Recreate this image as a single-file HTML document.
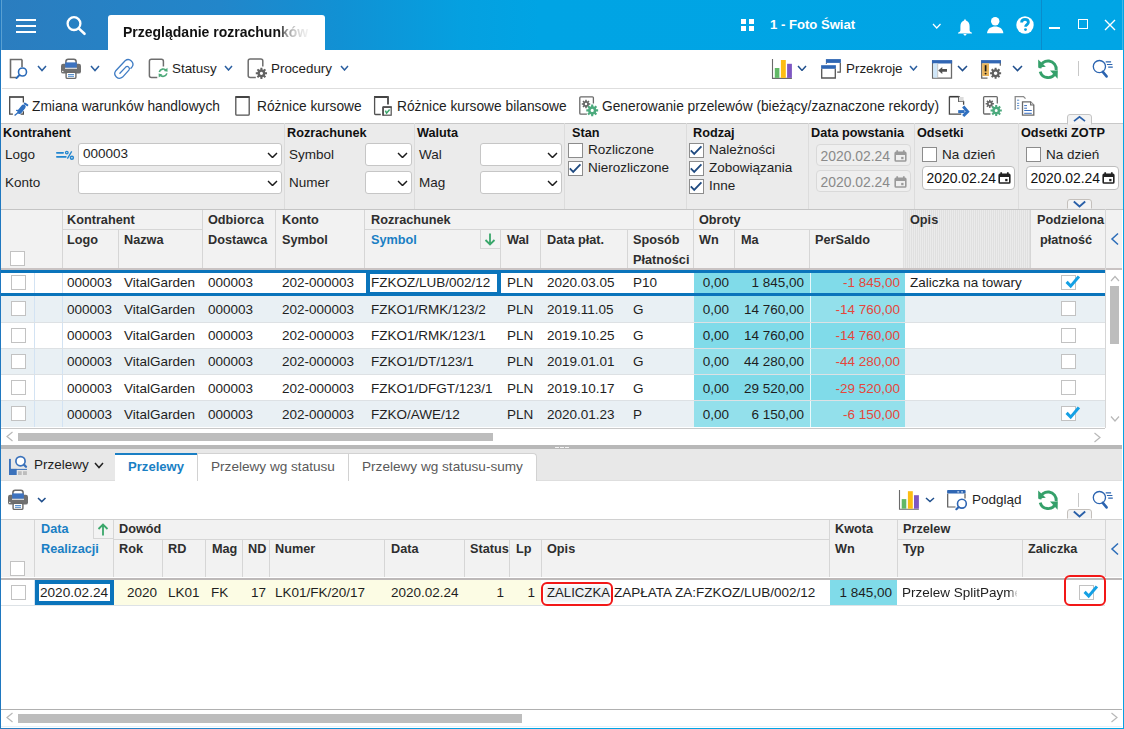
<!DOCTYPE html>
<html><head><meta charset="utf-8"><style>
html,body{margin:0;padding:0;width:1124px;height:729px;overflow:hidden;background:#fff;}
body{position:relative;font-family:"Liberation Sans",sans-serif;}
body>div,body>svg{position:absolute;}
.t{white-space:nowrap;line-height:20px;}
</style></head><body>
<div style="left:0px;top:0px;width:1124px;height:50px;background:linear-gradient(90deg,#2b7dbf 0px,#2286ca 220px,#1191d4 340px,#05a0e0 460px,#00a4e4 540px,#00a5e5 1124px);"></div>
<div style="left:1px;top:0px;width:1px;height:50px;background:#5aa0d2;"></div>
<div style="left:16px;top:19px;width:20px;height:2.2px;background:#fff;"></div>
<div style="left:16px;top:25px;width:20px;height:2.2px;background:#fff;"></div>
<div style="left:16px;top:31px;width:20px;height:2.2px;background:#fff;"></div>
<svg style="left:64px;top:13px;" width="26" height="26" viewBox="0 0 26 26"><circle cx="10" cy="10.6" r="6.4" fill="none" stroke="#fff" stroke-width="2.3"/><path d="M15 15.6 L20.5 20.8" stroke="#fff" stroke-width="2.6" stroke-linecap="round"/></svg>
<div style="left:108px;top:15px;width:217px;height:35px;background:#fff;border-radius:3px 3px 0 0;"></div>
<div class="t" style="left:123px;top:22px;font-size:14px;font-weight:bold;color:#111;line-height:20px;width:190px;overflow:hidden;-webkit-mask-image:linear-gradient(90deg,#000 156px,rgba(0,0,0,0.45) 163px,rgba(0,0,0,0.2) 173px,rgba(0,0,0,0.04) 186px);">Przeglądanie rozrachunków</div>
<div style="left:741px;top:19.3px;width:5.2px;height:4.8px;background:#fff;"></div>
<div style="left:748.7px;top:19.3px;width:5.2px;height:4.8px;background:#fff;"></div>
<div style="left:741px;top:26.2px;width:5.2px;height:4.8px;background:#fff;"></div>
<div style="left:748.7px;top:26.2px;width:5.2px;height:4.8px;background:#fff;"></div>
<div class="t" style="left:770px;top:15px;font-size:13.1px;font-weight:bold;color:#fff;line-height:20px;">1 - Foto Świat</div>
<svg style="left:932px;top:23px;" width="9.5" height="6" viewBox="0 0 9.5 6"><path d="M1 1 L4.75 5 L8.5 1" fill="none" stroke="#fff" stroke-width="1.2"/></svg>
<svg style="left:956px;top:17px;" width="18" height="20" viewBox="0 0 18 20"><path d="M9 1.8 L10 3.6 C12.6 4.4 13.6 6.8 13.6 9.6 L13.6 13.2 C13.6 14.4 14.6 15.2 16 15.8 L16 16.4 L2 16.4 L2 15.8 C3.4 15.2 4.4 14.4 4.4 13.2 L4.4 9.6 C4.4 6.8 5.4 4.4 8 3.6 Z" fill="#fff"/><path d="M7.2 17 L10.8 17 L9 19 Z" fill="#fff"/></svg>
<svg style="left:985px;top:14px;" width="22" height="20" viewBox="0 0 22 20"><circle cx="10.2" cy="7.2" r="4.2" fill="#fff"/><path d="M2 19.2 C2.6 14.6 6 12.6 10.2 12.6 C14.4 12.6 17.8 14.6 18.4 19.2 Z" fill="#fff"/></svg>
<svg style="left:1015px;top:15px;" width="20" height="20" viewBox="0 0 20 20"><circle cx="10" cy="10" r="8.7" fill="#fff"/><path d="M6.6 7.6 C6.6 5.4 8.2 4.4 10 4.4 C12 4.4 13.4 5.6 13.4 7.3 C13.4 9.6 10.6 9.6 10.6 11.8" fill="none" stroke="#05a0e0" stroke-width="2.8"/><circle cx="10.5" cy="14.6" r="1.4" fill="#05a0e0"/></svg>
<div style="left:1041px;top:0px;width:1px;height:50px;background:#0a8ccb;"></div>
<div style="left:1049px;top:27px;width:11px;height:1.6px;background:#fff;"></div>
<div style="left:1078px;top:19px;width:10px;height:10px;border:1.5px solid #fff;box-sizing:border-box;"></div>
<svg style="left:1104px;top:19px;" width="12" height="12" viewBox="0 0 12 12"><path d="M1 1 L11 11 M11 1 L1 11" stroke="#fff" stroke-width="1.4"/></svg>
<div style="left:1122px;top:0px;width:1px;height:50px;background:#40b8ea;"></div>
<!--borders-->
<div style="left:0px;top:50px;width:1124px;height:73px;background:#fff;"></div>
<div style="left:2px;top:88px;width:1120px;height:1px;background:#dedede;"></div>
<svg style="left:8px;top:58px;" width="24" height="22" viewBox="0 0 24 22"><path d="M14 1.5 L2.5 1.5 L2.5 19.5 L8 19.5 M14 1.5 L14 9" fill="none" stroke="#6b6b6b" stroke-width="1.6"/><circle cx="14.5" cy="14" r="4" fill="none" stroke="#2a6ab8" stroke-width="1.6"/><path d="M11.5 17 L8.5 20" stroke="#2a6ab8" stroke-width="2" stroke-linecap="round"/></svg>
<svg style="left:37px;top:65px;" width="10" height="6.5" viewBox="0 0 10 6.5"><path d="M1 1 L5.0 5.5 L9 1" fill="none" stroke="#2b5fa0" stroke-width="1.5"/></svg>
<svg style="left:60px;top:58px;" width="22" height="22" viewBox="0 0 22 22"><path d="M5.9 6 V3.6 Q5.9 1.3 8.2 1.3 H13.8 Q16.1 1.3 16.1 3.6 V6" fill="none" stroke="#6a6a6a" stroke-width="1.5"/><rect x="1" y="5.8" width="20" height="9.8" rx="2.2" fill="#707070"/><rect x="5.2" y="4.4" width="11.6" height="5.4" fill="#3d73c0"/><rect x="5" y="9.8" width="12" height="0.9" fill="#fff"/><circle cx="2.8" cy="13.4" r="0.7" fill="#fff"/><rect x="6.1" y="14.2" width="9.8" height="6.2" rx="1.2" fill="#fff" stroke="#6a6a6a" stroke-width="1.4"/><path d="M8 16.6 H14 M8 18.3 H14" stroke="#4a86c8" stroke-width="1"/></svg>
<svg style="left:90px;top:65px;" width="10" height="6.5" viewBox="0 0 10 6.5"><path d="M1 1 L5.0 5.5 L9 1" fill="none" stroke="#2b5fa0" stroke-width="1.5"/></svg>
<svg style="left:108px;top:54px;" width="30" height="30" viewBox="0 0 30 30"><path d="M22.9 14.3 L23.9 13.2 A4.7 4.7 0 0 0 17.1 6.8 L7.8 16.7 A4.7 4.7 0 0 0 14.6 23.1 L20.9 16.1 A2.2 2.2 0 0 0 17.7 13.1 L11.9 19.3" fill="none" stroke="#3f7cc4" stroke-width="1.3" stroke-linecap="round"/></svg>
<svg style="left:140px;top:54px;" width="30" height="30" viewBox="0 0 30 30"><path d="M17.6 23.4 H11.4 Q9.4 23.4 9.4 21.4 V7.3 Q9.4 5.3 11.4 5.3 H21.4 Q23.4 5.3 23.4 7.3 V12.5" fill="none" stroke="#6e6e6e" stroke-width="1.5"/><rect x="17.5" y="14" width="12" height="12" fill="#fff"/><path d="M19.3 18 A4 4 0 0 1 26.3 16.6 M26.9 19.4 A4 4 0 0 1 19.9 20.8" fill="none" stroke="#4aa877" stroke-width="1.6"/><path d="M27.4 13.8 L27.6 17.8 L23.8 17 Z M18.8 23.6 L18.6 19.6 L22.4 20.4 Z" fill="#4aa877"/></svg>
<div class="t" style="left:172px;top:59.36px;font-size:13.4px;color:#1e1e1e;">Statusy</div>
<svg style="left:224px;top:65px;" width="9" height="6" viewBox="0 0 9 6"><path d="M1 1 L4.5 5 L8 1" fill="none" stroke="#2b5fa0" stroke-width="1.5"/></svg>
<svg style="left:240px;top:54px;" width="30" height="30" viewBox="0 0 30 30"><path d="M15.8 23.4 H10.2 Q8.2 23.4 8.2 21.4 V7.1 Q8.2 5.1 10.2 5.1 H20.8 Q22.8 5.1 22.8 7.1 V12.6" fill="none" stroke="#6e6e6e" stroke-width="1.5"/><path d="M27.02 18.32 L27.02 20.28 L25.26 20.37 L24.88 21.27 L26.06 22.58 L24.68 23.96 L23.37 22.78 L22.47 23.16 L22.38 24.92 L20.42 24.92 L20.33 23.16 L19.43 22.78 L18.12 23.96 L16.74 22.58 L17.92 21.27 L17.54 20.37 L15.78 20.28 L15.78 18.32 L17.54 18.23 L17.92 17.33 L16.74 16.02 L18.12 14.64 L19.43 15.82 L20.33 15.44 L20.42 13.68 L22.38 13.68 L22.47 15.44 L23.37 15.82 L24.68 14.64 L26.06 16.02 L24.88 17.33 L25.26 18.23 Z M23.00 19.30 A1.6 1.6 0 1 0 19.80 19.30 A1.6 1.6 0 1 0 23.00 19.30 Z" fill="#626262" fill-rule="evenodd"/></svg>
<div class="t" style="left:271px;top:59.36px;font-size:13.4px;color:#1e1e1e;">Procedury</div>
<svg style="left:340px;top:65px;" width="9" height="6" viewBox="0 0 9 6"><path d="M1 1 L4.5 5 L8 1" fill="none" stroke="#2b5fa0" stroke-width="1.5"/></svg>
<svg style="left:765px;top:54px;" width="30" height="30" viewBox="0 0 30 30"><path d="M7.5 5.1 V24.4 H26.9" fill="none" stroke="#6a6a6a" stroke-width="1.1"/><rect x="9.8" y="14" width="4.6" height="9.9" fill="#62b866"/><rect x="15.9" y="6" width="4.9" height="17.9" fill="#fdbd12"/><rect x="22.1" y="9.8" width="4.8" height="14.1" fill="#7e57c2"/></svg>
<svg style="left:797px;top:65px;" width="10" height="6.4" viewBox="0 0 10 6.4"><path d="M1 1 L5.0 5.4 L9 1" fill="none" stroke="#1f4e8c" stroke-width="1.5"/></svg>
<svg style="left:765px;top:54px;" width="90" height="30" viewBox="0 0 90 30"><rect x="60.9" y="5.1" width="15" height="3.8" fill="#2f66b3"/><path d="M75.3 8.9 V18.2 H72.2 M61.4 8.9 V9.8" fill="none" stroke="#555" stroke-width="1.2"/><rect x="56.1" y="11.2" width="14.8" height="3.6" fill="#2f66b3"/><path d="M56.7 14.8 V24 H70.3 V14.8" fill="none" stroke="#555" stroke-width="1.3"/></svg>
<div class="t" style="left:846px;top:59.36px;font-size:13.4px;color:#1e1e1e;">Przekroje</div>
<svg style="left:909px;top:65px;" width="9" height="6" viewBox="0 0 9 6"><path d="M1 1 L4.5 5 L8 1" fill="none" stroke="#2b5fa0" stroke-width="1.5"/></svg>
<svg style="left:925px;top:54px;" width="30" height="30" viewBox="0 0 30 30"><path d="M7.6 6.4 V24.2 H26.5 V6.4" fill="none" stroke="#6a6a6a" stroke-width="1.3"/><rect x="7" y="6.1" width="20.1" height="3.4" fill="#3166b4"/><rect x="8.2" y="9.5" width="4.2" height="14.1" fill="#cfe6f8"/><path d="M12.7 9.5 V23.6" stroke="#b8b8b8" stroke-width="0.8"/><path d="M13.2 16.4 L17.3 12.9 V15.1 H22 V17.7 H17.3 V19.9 Z" fill="#505050"/></svg>
<svg style="left:957px;top:65px;" width="11" height="6.6" viewBox="0 0 11 6.6"><path d="M1 1 L5.5 5.6 L10 1" fill="none" stroke="#1f4e8c" stroke-width="1.5"/></svg>
<svg style="left:975px;top:54px;" width="30" height="30" viewBox="0 0 30 30"><path d="M6.7 6.4 V24.2 H12.5 M25.3 6.4 V11.8" fill="none" stroke="#6a6a6a" stroke-width="1.3"/><rect x="6.1" y="6.1" width="19.8" height="3.3" fill="#3166b4"/><rect x="7.2" y="9.3" width="6.8" height="12.7" fill="#e9b55b"/><path d="M10.6 11.2 V17.4" stroke="#1a1a1a" stroke-width="1.7"/><circle cx="10.6" cy="19.6" r="0.95" fill="#1a1a1a"/><path d="M26.12 18.24 L26.12 20.16 L24.46 20.27 L24.08 21.17 L25.18 22.42 L23.82 23.78 L22.57 22.68 L21.67 23.06 L21.56 24.72 L19.64 24.72 L19.53 23.06 L18.63 22.68 L17.38 23.78 L16.02 22.42 L17.12 21.17 L16.74 20.27 L15.08 20.16 L15.08 18.24 L16.74 18.13 L17.12 17.23 L16.02 15.98 L17.38 14.62 L18.63 15.72 L19.53 15.34 L19.64 13.68 L21.56 13.68 L21.67 15.34 L22.57 15.72 L23.82 14.62 L25.18 15.98 L24.08 17.23 L24.46 18.13 Z M22.40 19.20 A1.8 1.8 0 1 0 18.80 19.20 A1.8 1.8 0 1 0 22.40 19.20 Z" fill="#606060" fill-rule="evenodd"/></svg>
<svg style="left:1012px;top:65px;" width="11" height="6.6" viewBox="0 0 11 6.6"><path d="M1 1 L5.5 5.6 L10 1" fill="none" stroke="#1f4e8c" stroke-width="1.5"/></svg>
<svg style="left:1030px;top:52px;" width="30" height="30" viewBox="0 0 30 30"><path d="M9.9 16.2 A8.2 8.2 0 1 1 26.2 18.2" fill="none" stroke="#35a06a" stroke-width="2.9"/><path d="M10.2 19.6 A8.2 8.2 0 0 0 25.3 21.3" fill="none" stroke="#35a06a" stroke-width="2.9"/><path d="M8.2 7.4 L15.8 14.8 L8.2 15.4 Z" fill="#35a06a"/><path d="M20 18.6 L27.8 18.6 L27.6 26.8 Z" fill="#35a06a"/></svg>
<div style="left:1078px;top:61px;width:1px;height:15px;background:#c8c8c8;"></div>
<svg style="left:1090px;top:52px;" width="30" height="30" viewBox="0 0 30 30"><circle cx="9.4" cy="14.6" r="6.1" fill="none" stroke="#2b64b0" stroke-width="1.3"/><path d="M12.8 19.8 L16.6 24.4" stroke="#2b64b0" stroke-width="2.6" stroke-linecap="round"/><path d="M15.7 9.9 H21.1 M16.9 12.5 H22.4 M18.2 15.1 H22.8" stroke="#2b64b0" stroke-width="1.1"/></svg>
<svg style="left:4px;top:90px;" width="30" height="30" viewBox="0 0 30 30"><path d="M5.2 7 H19.8" stroke="#444" stroke-width="1.7"/><path d="M5.7 6.4 V24.1 H8.9 M16.6 24.1 H19.35 V21.3 M19.35 6.4 V12.4" fill="none" stroke="#4a4a4a" stroke-width="1.3"/><path d="M15.6 21.6 L19.4 16.9" stroke="#2f6fbf" stroke-width="4.6" stroke-linecap="round"/><path d="M20.8 13.6 L23.3 15.2" stroke="#2f6fbf" stroke-width="2" stroke-linecap="round"/><path d="M10.6 25.4 L14.8 22" stroke="#2f6fbf" stroke-width="1.3"/><path d="M12 20.4 H14.5" stroke="#2f6fbf" stroke-width="1.1"/></svg>
<div class="t" style="left:32px;top:97.24px;font-size:13.75px;color:#1e1e1e;">Zmiana warunków handlowych</div>
<svg style="left:228px;top:90px;" width="30" height="30" viewBox="0 0 30 30"><path d="M7.4 7 H21.6" stroke="#3a3a3a" stroke-width="1.9"/><path d="M7.8 6.6 V24.2 Q7.8 25.1 8.7 25.1 H20.3 Q21.2 25.1 21.2 24.2 V6.6" fill="none" stroke="#525252" stroke-width="1.3"/></svg>
<div class="t" style="left:257px;top:97.24px;font-size:13.75px;color:#1e1e1e;">Różnice kursowe</div>
<svg style="left:366px;top:90px;" width="30" height="30" viewBox="0 0 30 30"><path d="M8 7 H22.6" stroke="#3a3a3a" stroke-width="1.9"/><path d="M8.6 6.6 V23.6 Q8.6 24.5 9.5 24.5 H14.8" fill="none" stroke="#525252" stroke-width="1.3"/><path d="M22 6.6 V14.6" stroke="#525252" stroke-width="1.9"/><rect x="17" y="17" width="8.2" height="8.2" fill="#fff" stroke="#525252" stroke-width="1.2"/><path d="M16.9 17.1 H25.6 M17.1 17 V25.6" stroke="#525252" stroke-width="1.6"/><path d="M19.4 20.6 L20.6 23.2 L23.6 19.6" fill="none" stroke="#3aa76b" stroke-width="1.5"/></svg>
<div class="t" style="left:397px;top:97.24px;font-size:13.75px;color:#1e1e1e;">Różnice kursowe bilansowe</div>
<svg style="left:570px;top:90px;" width="30" height="30" viewBox="0 0 30 30"><path d="M16.9 24.2 H10.8 Q9.8 24.2 9.8 23.2 V7.8 Q9.8 6.8 10.8 6.8 H22.4 Q23.4 6.8 23.4 7.8 V13.6" fill="none" stroke="#6a6a6a" stroke-width="1.3"/><path d="M20.24 13.26 L20.24 14.74 L18.89 14.80 L18.61 15.48 L19.52 16.47 L18.47 17.52 L17.48 16.61 L16.80 16.89 L16.74 18.24 L15.26 18.24 L15.20 16.89 L14.52 16.61 L13.53 17.52 L12.48 16.47 L13.39 15.48 L13.11 14.80 L11.76 14.74 L11.76 13.26 L13.11 13.20 L13.39 12.52 L12.48 11.53 L13.53 10.48 L14.52 11.39 L15.20 11.11 L15.26 9.76 L16.74 9.76 L16.80 11.11 L17.48 11.39 L18.47 10.48 L19.52 11.53 L18.61 12.52 L18.89 13.20 Z M17.20 14.00 A1.2 1.2 0 1 0 14.80 14.00 A1.2 1.2 0 1 0 17.20 14.00 Z" fill="#666666" fill-rule="evenodd"/><path d="M28.11 19.37 L28.11 21.43 L26.25 21.52 L25.85 22.47 L27.11 23.85 L25.65 25.31 L24.27 24.05 L23.32 24.45 L23.23 26.31 L21.17 26.31 L21.08 24.45 L20.13 24.05 L18.75 25.31 L17.29 23.85 L18.55 22.47 L18.15 21.52 L16.29 21.43 L16.29 19.37 L18.15 19.28 L18.55 18.33 L17.29 16.95 L18.75 15.49 L20.13 16.75 L21.08 16.35 L21.17 14.49 L23.23 14.49 L23.32 16.35 L24.27 16.75 L25.65 15.49 L27.11 16.95 L25.85 18.33 L26.25 19.28 Z M23.80 20.40 A1.6 1.6 0 1 0 20.60 20.40 A1.6 1.6 0 1 0 23.80 20.40 Z" fill="#4caa7d" fill-rule="evenodd"/></svg>
<div class="t" style="left:602px;top:97.24px;font-size:13.75px;color:#1e1e1e;">Generowanie przelewów (bieżący/zaznaczone rekordy)</div>
<svg style="left:940px;top:90px;" width="30" height="30" viewBox="0 0 30 30"><path d="M9.3 6.7 H18.8" stroke="#3a3a3a" stroke-width="1.6"/><path d="M9.4 6.4 V24.1 H21.2 M18.8 6.4 L23.6 11.4 V14.8 M18.8 6.4 V11.4 H23.6" fill="none" stroke="#4a4a4a" stroke-width="1.3"/><rect x="19" y="7" width="4.6" height="4.4" fill="#dcdcdc"/><path d="M18.2 21.6 H24.6" stroke="#2f6fbf" stroke-width="3"/><path d="M23.2 16.6 L27.6 21.6 L23.2 26" fill="none" stroke="#2f6fbf" stroke-width="3"/></svg>
<svg style="left:980px;top:90px;" width="30" height="30" viewBox="0 0 30 30"><path d="M10.5 24.0 H4.6 Q3.6 24.0 3.6 23.0 V7.6 Q3.6 6.6 4.6 6.6 H16.3 Q17.3 6.6 17.3 7.6 V13.6" fill="none" stroke="#6a6a6a" stroke-width="1.3"/><path d="M13.94 13.08 L13.94 14.52 L12.59 14.57 L12.32 15.23 L13.24 16.22 L12.22 17.24 L11.23 16.32 L10.57 16.59 L10.52 17.94 L9.08 17.94 L9.03 16.59 L8.37 16.32 L7.38 17.24 L6.36 16.22 L7.28 15.23 L7.01 14.57 L5.66 14.52 L5.66 13.08 L7.01 13.03 L7.28 12.37 L6.36 11.38 L7.38 10.36 L8.37 11.28 L9.03 11.01 L9.08 9.66 L10.52 9.66 L10.57 11.01 L11.23 11.28 L12.22 10.36 L13.24 11.38 L12.32 12.37 L12.59 13.03 Z M10.90 13.80 A1.1 1.1 0 1 0 8.70 13.80 A1.1 1.1 0 1 0 10.90 13.80 Z" fill="#666666" fill-rule="evenodd"/><path d="M21.82 19.52 L21.82 21.48 L20.06 21.57 L19.68 22.47 L20.86 23.78 L19.48 25.16 L18.17 23.98 L17.27 24.36 L17.18 26.12 L15.22 26.12 L15.13 24.36 L14.23 23.98 L12.92 25.16 L11.54 23.78 L12.72 22.47 L12.34 21.57 L10.58 21.48 L10.58 19.52 L12.34 19.43 L12.72 18.53 L11.54 17.22 L12.92 15.84 L14.23 17.02 L15.13 16.64 L15.22 14.88 L17.18 14.88 L17.27 16.64 L18.17 17.02 L19.48 15.84 L20.86 17.22 L19.68 18.53 L20.06 19.43 Z M17.70 20.50 A1.5 1.5 0 1 0 14.70 20.50 A1.5 1.5 0 1 0 17.70 20.50 Z" fill="#4caa7d" fill-rule="evenodd"/></svg>
<svg style="left:1010px;top:90px;" width="30" height="30" viewBox="0 0 30 30"><path d="M5.2 20 V6.6 H13.5 L15.5 8.6" fill="none" stroke="#8a8a8a" stroke-width="1.3"/><path d="M7 10.2 H9.2 M7 13.3 H9.2 M7 15.6 H9.2 M7 18.2 H9.2" stroke="#4a82c8" stroke-width="0.9"/><path d="M12.5 25.2 V11.8 H20.6 L23.8 15 V25.2 Z" fill="#fff" stroke="#6a6a6a" stroke-width="1.3"/><path d="M20.6 11.8 V15 H23.8" fill="#ddd" stroke="#6a6a6a" stroke-width="1.1"/><path d="M14.2 15.6 H17 M14.2 18.2 H17 M14.2 20.5 H21.8 M14.2 23.3 H21.8" stroke="#3a6fbf" stroke-width="1"/></svg>
<div style="left:1px;top:123px;width:1122px;height:87px;background:#ebebeb;"></div>
<div style="left:1px;top:123px;width:1122px;height:1px;background:#c8c8c8;"></div>
<div style="left:1px;top:209px;width:1122px;height:1px;background:#c4c4c4;"></div>
<div style="left:284px;top:123px;width:1px;height:86px;background:#dcdcdc;"></div>
<div style="left:414px;top:123px;width:1px;height:86px;background:#dcdcdc;"></div>
<div style="left:564px;top:123px;width:1px;height:86px;background:#dcdcdc;"></div>
<div style="left:686px;top:123px;width:1px;height:86px;background:#dcdcdc;"></div>
<div style="left:808px;top:123px;width:1px;height:86px;background:#dcdcdc;"></div>
<div style="left:914px;top:123px;width:1px;height:86px;background:#dcdcdc;"></div>
<div style="left:1018px;top:123px;width:1px;height:86px;background:#dcdcdc;"></div>
<div class="t" style="left:3px;top:122.6px;font-size:12.7px;font-weight:bold;color:#111;">Kontrahent</div>
<div class="t" style="left:287px;top:122.6px;font-size:12.7px;font-weight:bold;color:#111;">Rozrachunek</div>
<div class="t" style="left:417px;top:122.6px;font-size:12.7px;font-weight:bold;color:#111;">Waluta</div>
<div class="t" style="left:572px;top:122.6px;font-size:12.7px;font-weight:bold;color:#111;">Stan</div>
<div class="t" style="left:693px;top:122.6px;font-size:12.7px;font-weight:bold;color:#111;">Rodzaj</div>
<div class="t" style="left:811px;top:122.6px;font-size:12.7px;font-weight:bold;color:#111;">Data powstania</div>
<div class="t" style="left:917px;top:122.6px;font-size:12.7px;font-weight:bold;color:#111;">Odsetki</div>
<div class="t" style="left:1021px;top:122.6px;font-size:12.7px;font-weight:bold;color:#111;">Odsetki ZOTP</div>
<div class="t" style="left:5px;top:145.32px;font-size:13.5px;color:#1e1e1e;">Logo</div>
<svg style="left:50px;top:145px;" width="28" height="20" viewBox="0 0 28 20"><path d="M6.9 7.8 H13.1 M6.9 11.8 H15.8" stroke="#2286cf" stroke-width="1.8" stroke-linecap="round"/><path d="M21.7 6.4 L17.4 13.7" stroke="#2286cf" stroke-width="1.3"/><circle cx="16.8" cy="7.6" r="1.3" fill="none" stroke="#2286cf" stroke-width="1.3"/><circle cx="21.9" cy="12.7" r="1.5" fill="none" stroke="#2286cf" stroke-width="1.4"/></svg>
<div style="left:78px;top:143px;width:204px;height:23px;background:#fff;border:1px solid #c6c6c6;border-radius:3px;box-sizing:border-box;"></div>
<div class="t" style="left:83px;top:144.32px;font-size:13.5px;color:#1e1e1e;">000003</div>
<svg style="left:267px;top:151.5px;" width="11" height="6.6" viewBox="0 0 11 6.6"><path d="M1 1 L5.5 5.6 L10 1" fill="none" stroke="#1a1a1a" stroke-width="1.4"/></svg>
<div class="t" style="left:5px;top:173.32px;font-size:13.5px;color:#1e1e1e;">Konto</div>
<div style="left:78px;top:171px;width:204px;height:23px;background:#fff;border:1px solid #c6c6c6;border-radius:3px;box-sizing:border-box;"></div>
<svg style="left:267px;top:179.5px;" width="11" height="6.6" viewBox="0 0 11 6.6"><path d="M1 1 L5.5 5.6 L10 1" fill="none" stroke="#1a1a1a" stroke-width="1.4"/></svg>
<div class="t" style="left:289px;top:145.32px;font-size:13.5px;color:#1e1e1e;">Symbol</div>
<div style="left:365px;top:143px;width:47px;height:23px;background:#fff;border:1px solid #c6c6c6;border-radius:3px;box-sizing:border-box;"></div>
<svg style="left:397px;top:151.5px;" width="11" height="6.6" viewBox="0 0 11 6.6"><path d="M1 1 L5.5 5.6 L10 1" fill="none" stroke="#1a1a1a" stroke-width="1.4"/></svg>
<div class="t" style="left:289px;top:173.32px;font-size:13.5px;color:#1e1e1e;">Numer</div>
<div style="left:365px;top:171px;width:47px;height:23px;background:#fff;border:1px solid #c6c6c6;border-radius:3px;box-sizing:border-box;"></div>
<svg style="left:397px;top:179.5px;" width="11" height="6.6" viewBox="0 0 11 6.6"><path d="M1 1 L5.5 5.6 L10 1" fill="none" stroke="#1a1a1a" stroke-width="1.4"/></svg>
<div class="t" style="left:419px;top:145.32px;font-size:13.5px;color:#1e1e1e;">Wal</div>
<div style="left:480px;top:143px;width:82px;height:23px;background:#fff;border:1px solid #c6c6c6;border-radius:3px;box-sizing:border-box;"></div>
<svg style="left:547px;top:151.5px;" width="11" height="6.6" viewBox="0 0 11 6.6"><path d="M1 1 L5.5 5.6 L10 1" fill="none" stroke="#1a1a1a" stroke-width="1.4"/></svg>
<div class="t" style="left:419px;top:173.32px;font-size:13.5px;color:#1e1e1e;">Mag</div>
<div style="left:480px;top:171px;width:82px;height:23px;background:#fff;border:1px solid #c6c6c6;border-radius:3px;box-sizing:border-box;"></div>
<svg style="left:547px;top:179.5px;" width="11" height="6.6" viewBox="0 0 11 6.6"><path d="M1 1 L5.5 5.6 L10 1" fill="none" stroke="#1a1a1a" stroke-width="1.4"/></svg>
<div style="left:568px;top:143px;width:15px;height:15px;background:#fff;border:1.3px solid #8c8c8c;box-sizing:border-box;"></div>
<div class="t" style="left:588px;top:140.32px;font-size:13.5px;color:#1e1e1e;">Rozliczone</div>
<div style="left:568px;top:161px;width:15px;height:15px;background:#fff;border:1.3px solid #8c8c8c;box-sizing:border-box;"></div>
<svg style="left:568px;top:161px;" width="15" height="15" viewBox="0 0 15 15"><path d="M1.8 7.4 L5.2 10.9 L12.4 3.4" fill="none" stroke="#1f4a80" stroke-width="1.8"/></svg>
<div class="t" style="left:588px;top:158.32px;font-size:13.5px;color:#1e1e1e;">Nierozliczone</div>
<div style="left:689px;top:143px;width:15px;height:15px;background:#fff;border:1.3px solid #8c8c8c;box-sizing:border-box;"></div>
<svg style="left:689px;top:143px;" width="15" height="15" viewBox="0 0 15 15"><path d="M1.8 7.4 L5.2 10.9 L12.4 3.4" fill="none" stroke="#1f4a80" stroke-width="1.8"/></svg>
<div class="t" style="left:709px;top:140.32px;font-size:13.5px;color:#1e1e1e;">Należności</div>
<div style="left:689px;top:161px;width:15px;height:15px;background:#fff;border:1.3px solid #8c8c8c;box-sizing:border-box;"></div>
<svg style="left:689px;top:161px;" width="15" height="15" viewBox="0 0 15 15"><path d="M1.8 7.4 L5.2 10.9 L12.4 3.4" fill="none" stroke="#1f4a80" stroke-width="1.8"/></svg>
<div class="t" style="left:709px;top:158.32px;font-size:13.5px;color:#1e1e1e;">Zobowiązania</div>
<div style="left:689px;top:179px;width:15px;height:15px;background:#fff;border:1.3px solid #8c8c8c;box-sizing:border-box;"></div>
<svg style="left:689px;top:179px;" width="15" height="15" viewBox="0 0 15 15"><path d="M1.8 7.4 L5.2 10.9 L12.4 3.4" fill="none" stroke="#1f4a80" stroke-width="1.8"/></svg>
<div class="t" style="left:709px;top:176.32px;font-size:13.5px;color:#1e1e1e;">Inne</div>
<div style="left:816px;top:144px;width:95px;height:22px;background:#efefef;border:1px solid #d9d9d9;border-radius:4px;box-sizing:border-box;"></div>
<div class="t" style="left:820.5px;top:145.68px;font-size:13.9px;color:#8a8a8a;">2020.02.24</div>
<svg style="left:894px;top:149.5px;" width="13" height="12" viewBox="0 0 13 12"><path d="M3.2 0.3 V2.8 M9.8 0.3 V2.8" stroke="#9a9a9a" stroke-width="1.7"/><rect x="1.2" y="2.4" width="10.6" height="8.6" rx="0.8" fill="none" stroke="#9a9a9a" stroke-width="1.6"/><rect x="1.2" y="2.4" width="10.6" height="2.6" fill="#9a9a9a"/><rect x="7.2" y="6.9" width="2.3" height="2.3" fill="#9a9a9a"/></svg>
<div style="left:816px;top:170px;width:95px;height:22px;background:#efefef;border:1px solid #d9d9d9;border-radius:4px;box-sizing:border-box;"></div>
<div class="t" style="left:820.5px;top:171.68px;font-size:13.9px;color:#8a8a8a;">2020.02.24</div>
<svg style="left:894px;top:175.5px;" width="13" height="12" viewBox="0 0 13 12"><path d="M3.2 0.3 V2.8 M9.8 0.3 V2.8" stroke="#9a9a9a" stroke-width="1.7"/><rect x="1.2" y="2.4" width="10.6" height="8.6" rx="0.8" fill="none" stroke="#9a9a9a" stroke-width="1.6"/><rect x="1.2" y="2.4" width="10.6" height="2.6" fill="#9a9a9a"/><rect x="7.2" y="6.9" width="2.3" height="2.3" fill="#9a9a9a"/></svg>
<div style="left:922px;top:147px;width:15px;height:15px;background:#fff;border:1.3px solid #8c8c8c;box-sizing:border-box;"></div>
<div class="t" style="left:942px;top:145.32px;font-size:13.5px;color:#1e1e1e;">Na dzień</div>
<div style="left:922px;top:166px;width:93px;height:24px;background:#fff;border:1px solid #bdbdbd;border-radius:4px;box-sizing:border-box;"></div>
<div class="t" style="left:926.5px;top:167.68px;font-size:13.9px;color:#111;">2020.02.24</div>
<svg style="left:998px;top:171.5px;" width="13" height="12" viewBox="0 0 13 12"><path d="M3.2 0.3 V2.8 M9.8 0.3 V2.8" stroke="#222" stroke-width="1.7"/><rect x="1.2" y="2.4" width="10.6" height="8.6" rx="0.8" fill="none" stroke="#222" stroke-width="1.6"/><rect x="1.2" y="2.4" width="10.6" height="2.6" fill="#222"/><rect x="7.2" y="6.9" width="2.3" height="2.3" fill="#222"/></svg>
<div style="left:1026px;top:147px;width:15px;height:15px;background:#fff;border:1.3px solid #8c8c8c;box-sizing:border-box;"></div>
<div class="t" style="left:1046px;top:145.32px;font-size:13.5px;color:#1e1e1e;">Na dzień</div>
<div style="left:1026px;top:166px;width:93px;height:24px;background:#fff;border:1px solid #bdbdbd;border-radius:4px;box-sizing:border-box;"></div>
<div class="t" style="left:1030.5px;top:167.68px;font-size:13.9px;color:#111;">2020.02.24</div>
<svg style="left:1102px;top:171.5px;" width="13" height="12" viewBox="0 0 13 12"><path d="M3.2 0.3 V2.8 M9.8 0.3 V2.8" stroke="#222" stroke-width="1.7"/><rect x="1.2" y="2.4" width="10.6" height="8.6" rx="0.8" fill="none" stroke="#222" stroke-width="1.6"/><rect x="1.2" y="2.4" width="10.6" height="2.6" fill="#222"/><rect x="7.2" y="6.9" width="2.3" height="2.3" fill="#222"/></svg>
<svg style="left:1067px;top:114px;" width="25" height="11" viewBox="0 0 25 11"><path d="M0.5 10.5 V3 Q0.5 0.5 3 0.5 H22 Q24.5 0.5 24.5 3 V10.5" fill="#f3f3f3" stroke="#c4c4c4"/><path d="M7 7.2 L12.5 2.8 L18 7.2" fill="none" stroke="#2a60a8" stroke-width="1.7"/></svg>
<svg style="left:1067px;top:199px;" width="25" height="10" viewBox="0 0 25 10"><path d="M0.5 9.5 V3 Q0.5 0.5 3 0.5 H22 Q24.5 0.5 24.5 3 V9.5" fill="#f3f3f3" stroke="#c4c0bc"/><path d="M6.8 2.6 L12.5 7.4 L18.2 2.6" fill="none" stroke="#2a60a8" stroke-width="1.9"/></svg>
<div style="left:1px;top:210px;width:1121px;height:58px;background:#f2f2f2;"></div>
<div style="left:903px;top:210px;width:127px;height:58px;background-color:#e6e6e6;background-image:repeating-linear-gradient(90deg,#e0e0e0 0 1px,#ebebeb 1px 2px);"></div>
<div style="left:62px;top:210px;width:1px;height:58px;background:#d6d6d6;"></div>
<div style="left:202px;top:210px;width:1px;height:58px;background:#d6d6d6;"></div>
<div style="left:275px;top:210px;width:1px;height:58px;background:#d6d6d6;"></div>
<div style="left:364px;top:210px;width:1px;height:58px;background:#d6d6d6;"></div>
<div style="left:693px;top:210px;width:1px;height:58px;background:#d6d6d6;"></div>
<div style="left:1030px;top:210px;width:1px;height:58px;background:#d6d6d6;"></div>
<div style="left:1105px;top:210px;width:1px;height:58px;background:#d6d6d6;"></div>
<div style="left:118px;top:229px;width:1px;height:39px;background:#d6d6d6;"></div>
<div style="left:500px;top:229px;width:1px;height:39px;background:#d6d6d6;"></div>
<div style="left:540px;top:229px;width:1px;height:39px;background:#d6d6d6;"></div>
<div style="left:627px;top:229px;width:1px;height:39px;background:#d6d6d6;"></div>
<div style="left:734px;top:229px;width:1px;height:39px;background:#d6d6d6;"></div>
<div style="left:809px;top:229px;width:1px;height:39px;background:#d6d6d6;"></div>
<div style="left:62px;top:229px;width:140px;height:1px;background:#d6d6d6;"></div>
<div style="left:364px;top:229px;width:329px;height:1px;background:#d6d6d6;"></div>
<div style="left:693px;top:229px;width:210px;height:1px;background:#d6d6d6;"></div>
<div style="left:480px;top:230px;width:20px;height:19px;border-left:1px solid #d6d6d6;border-bottom:1px solid #d6d6d6;box-sizing:border-box;background:#f3f3f3;"></div>
<svg style="left:483px;top:232px;" width="14" height="15" viewBox="0 0 14 15"><path d="M7 1.5 V12.5 M2.5 8 L7 12.5 L11.5 8" fill="none" stroke="#3aa76b" stroke-width="1.8"/></svg>
<div style="left:1px;top:268px;width:1121px;height:2px;background:#c9c3c3;"></div>
<div class="t" style="left:67px;top:209.6px;font-size:12.7px;font-weight:bold;color:#2e2e2e;">Kontrahent</div>
<div class="t" style="left:67px;top:229.6px;font-size:12.7px;font-weight:bold;color:#2e2e2e;">Logo</div>
<div class="t" style="left:124px;top:229.6px;font-size:12.7px;font-weight:bold;color:#2e2e2e;">Nazwa</div>
<div class="t" style="left:208px;top:209.6px;font-size:12.7px;font-weight:bold;color:#2e2e2e;">Odbiorca</div>
<div class="t" style="left:208px;top:229.6px;font-size:12.7px;font-weight:bold;color:#2e2e2e;">Dostawca</div>
<div class="t" style="left:282px;top:209.6px;font-size:12.7px;font-weight:bold;color:#2e2e2e;">Konto</div>
<div class="t" style="left:282px;top:229.6px;font-size:12.7px;font-weight:bold;color:#2e2e2e;">Symbol</div>
<div class="t" style="left:371px;top:209.6px;font-size:12.7px;font-weight:bold;color:#2e2e2e;">Rozrachunek</div>
<div class="t" style="left:371px;top:229.6px;font-size:12.7px;font-weight:bold;color:#1a7fc4;">Symbol</div>
<div class="t" style="left:507px;top:229.6px;font-size:12.7px;font-weight:bold;color:#2e2e2e;">Wal</div>
<div class="t" style="left:547px;top:229.6px;font-size:12.7px;font-weight:bold;color:#2e2e2e;">Data płat.</div>
<div class="t" style="left:633px;top:229.6px;font-size:12.7px;font-weight:bold;color:#2e2e2e;">Sposób</div>
<div class="t" style="left:633px;top:249.6px;font-size:12.7px;font-weight:bold;color:#2e2e2e;">Płatności</div>
<div class="t" style="left:699px;top:209.6px;font-size:12.7px;font-weight:bold;color:#2e2e2e;">Obroty</div>
<div class="t" style="left:699px;top:229.6px;font-size:12.7px;font-weight:bold;color:#2e2e2e;">Wn</div>
<div class="t" style="left:741px;top:229.6px;font-size:12.7px;font-weight:bold;color:#2e2e2e;">Ma</div>
<div class="t" style="left:815px;top:229.6px;font-size:12.7px;font-weight:bold;color:#2e2e2e;">PerSaldo</div>
<div class="t" style="left:910px;top:209.6px;font-size:12.7px;font-weight:bold;color:#2e2e2e;">Opis</div>
<div class="t" style="left:1037px;top:209.5px;width:68px;overflow:hidden;font-size:12.7px;font-weight:bold;color:#2e2e2e;">Podzielona</div>
<div class="t" style="left:1040px;top:229.6px;font-size:12.7px;font-weight:bold;color:#2e2e2e;">płatność</div>
<svg style="left:1109px;top:232px;" width="12" height="14" viewBox="0 0 12 14"><path d="M9 1.5 L3 7 L9 12.5" fill="none" stroke="#2b6cb8" stroke-width="1.5"/></svg>
<div style="left:10px;top:251px;width:15px;height:15px;background:#fff;border:1.6px solid #c2c2c2;box-sizing:border-box;"></div>
<div style="left:1px;top:270px;width:1104px;height:26px;background:#fff;"></div>
<div style="left:694px;top:270px;width:211px;height:26px;background:#80dbe9;"></div>
<div style="left:810px;top:270px;width:1px;height:26px;background:#ffffff;opacity:0.8;"></div>
<div style="left:34px;top:270px;width:1px;height:26px;background:#d3e3f3;"></div>
<div style="left:62px;top:270px;width:1px;height:26px;background:#d3e3f3;"></div>
<div style="left:1px;top:296px;width:1104px;height:27px;background:#e9f0f4;"></div>
<div style="left:694px;top:296px;width:211px;height:27px;background:#93e0eb;"></div>
<div style="left:810px;top:296px;width:1px;height:27px;background:#ffffff;opacity:0.8;"></div>
<div style="left:34px;top:296px;width:1px;height:27px;background:#d3e3f3;"></div>
<div style="left:62px;top:296px;width:1px;height:27px;background:#d3e3f3;"></div>
<div style="left:1px;top:323px;width:1104px;height:26px;background:#fff;"></div>
<div style="left:694px;top:323px;width:211px;height:26px;background:#80dbe9;"></div>
<div style="left:810px;top:323px;width:1px;height:26px;background:#ffffff;opacity:0.8;"></div>
<div style="left:34px;top:323px;width:1px;height:26px;background:#d3e3f3;"></div>
<div style="left:62px;top:323px;width:1px;height:26px;background:#d3e3f3;"></div>
<div style="left:1px;top:349px;width:1104px;height:26px;background:#e9f0f4;"></div>
<div style="left:694px;top:349px;width:211px;height:26px;background:#93e0eb;"></div>
<div style="left:810px;top:349px;width:1px;height:26px;background:#ffffff;opacity:0.8;"></div>
<div style="left:34px;top:349px;width:1px;height:26px;background:#d3e3f3;"></div>
<div style="left:62px;top:349px;width:1px;height:26px;background:#d3e3f3;"></div>
<div style="left:1px;top:375px;width:1104px;height:26px;background:#fff;"></div>
<div style="left:694px;top:375px;width:211px;height:26px;background:#80dbe9;"></div>
<div style="left:810px;top:375px;width:1px;height:26px;background:#ffffff;opacity:0.8;"></div>
<div style="left:34px;top:375px;width:1px;height:26px;background:#d3e3f3;"></div>
<div style="left:62px;top:375px;width:1px;height:26px;background:#d3e3f3;"></div>
<div style="left:1px;top:401px;width:1104px;height:26px;background:#e9f0f4;"></div>
<div style="left:694px;top:401px;width:211px;height:26px;background:#93e0eb;"></div>
<div style="left:810px;top:401px;width:1px;height:26px;background:#ffffff;opacity:0.8;"></div>
<div style="left:34px;top:401px;width:1px;height:26px;background:#d3e3f3;"></div>
<div style="left:62px;top:401px;width:1px;height:26px;background:#d3e3f3;"></div>
<div style="left:11px;top:275px;width:15px;height:15px;background:#fff;border:1.6px solid #c2c2c2;box-sizing:border-box;"></div>
<div class="t" style="left:67px;top:273.32px;font-size:13.5px;color:#1e1e1e;">000003</div>
<div class="t" style="left:124px;top:273.32px;font-size:13.5px;color:#1e1e1e;">VitalGarden</div>
<div class="t" style="left:208px;top:273.32px;font-size:13.5px;color:#1e1e1e;">000003</div>
<div class="t" style="left:282px;top:273.32px;font-size:13.5px;color:#1e1e1e;">202-000003</div>
<div class="t" style="left:371px;top:273.32px;font-size:13.5px;color:#1e1e1e;">FZKOZ/LUB/002/12</div>
<div class="t" style="left:507px;top:273.32px;font-size:13.5px;color:#1e1e1e;">PLN</div>
<div class="t" style="left:547px;top:273.32px;font-size:13.5px;color:#1e1e1e;">2020.03.05</div>
<div class="t" style="left:633px;top:273.32px;font-size:13.5px;color:#1e1e1e;">P10</div>
<div class="t" style="right:395px;top:273.32px;font-size:13.5px;color:#1e1e1e;">0,00</div>
<div class="t" style="right:320px;top:273.32px;font-size:13.5px;color:#1e1e1e;">1 845,00</div>
<div class="t" style="right:224px;top:273.32px;font-size:13.5px;color:#e5473b;">-1 845,00</div>
<div class="t" style="left:910px;top:273.32px;font-size:13.5px;color:#1e1e1e;">Zaliczka na towary</div>
<div style="left:1061px;top:275px;width:15px;height:15px;background:#fff;border:1.6px solid #c2c2c2;box-sizing:border-box;"></div>
<svg style="left:1062px;top:272px;" width="18" height="18" viewBox="0 0 18 18"><path d="M4.6 9.9 L8.7 14.1 L16.9 4.4" fill="none" stroke="#14a0e4" stroke-width="3"/></svg>
<div style="left:11px;top:301px;width:15px;height:15px;background:#fff;border:1.6px solid #c2c2c2;box-sizing:border-box;"></div>
<div class="t" style="left:67px;top:300.32px;font-size:13.5px;color:#1e1e1e;">000003</div>
<div class="t" style="left:124px;top:300.32px;font-size:13.5px;color:#1e1e1e;">VitalGarden</div>
<div class="t" style="left:208px;top:300.32px;font-size:13.5px;color:#1e1e1e;">000003</div>
<div class="t" style="left:282px;top:300.32px;font-size:13.5px;color:#1e1e1e;">202-000003</div>
<div class="t" style="left:371px;top:300.32px;font-size:13.5px;color:#1e1e1e;">FZKO1/RMK/123/2</div>
<div class="t" style="left:507px;top:300.32px;font-size:13.5px;color:#1e1e1e;">PLN</div>
<div class="t" style="left:547px;top:300.32px;font-size:13.5px;color:#1e1e1e;">2019.11.05</div>
<div class="t" style="left:633px;top:300.32px;font-size:13.5px;color:#1e1e1e;">G</div>
<div class="t" style="right:395px;top:300.32px;font-size:13.5px;color:#1e1e1e;">0,00</div>
<div class="t" style="right:320px;top:300.32px;font-size:13.5px;color:#1e1e1e;">14 760,00</div>
<div class="t" style="right:224px;top:300.32px;font-size:13.5px;color:#e5473b;">-14 760,00</div>
<div style="left:1061px;top:301px;width:15px;height:15px;background:#fff;border:1.6px solid #c2c2c2;box-sizing:border-box;"></div>
<div style="left:1px;top:322px;width:1104px;height:1px;background:#dde1e4;"></div>
<div style="left:11px;top:328px;width:15px;height:15px;background:#fff;border:1.6px solid #c2c2c2;box-sizing:border-box;"></div>
<div class="t" style="left:67px;top:326.32px;font-size:13.5px;color:#1e1e1e;">000003</div>
<div class="t" style="left:124px;top:326.32px;font-size:13.5px;color:#1e1e1e;">VitalGarden</div>
<div class="t" style="left:208px;top:326.32px;font-size:13.5px;color:#1e1e1e;">000003</div>
<div class="t" style="left:282px;top:326.32px;font-size:13.5px;color:#1e1e1e;">202-000003</div>
<div class="t" style="left:371px;top:326.32px;font-size:13.5px;color:#1e1e1e;">FZKO1/RMK/123/1</div>
<div class="t" style="left:507px;top:326.32px;font-size:13.5px;color:#1e1e1e;">PLN</div>
<div class="t" style="left:547px;top:326.32px;font-size:13.5px;color:#1e1e1e;">2019.10.25</div>
<div class="t" style="left:633px;top:326.32px;font-size:13.5px;color:#1e1e1e;">G</div>
<div class="t" style="right:395px;top:326.32px;font-size:13.5px;color:#1e1e1e;">0,00</div>
<div class="t" style="right:320px;top:326.32px;font-size:13.5px;color:#1e1e1e;">14 760,00</div>
<div class="t" style="right:224px;top:326.32px;font-size:13.5px;color:#e5473b;">-14 760,00</div>
<div style="left:1061px;top:328px;width:15px;height:15px;background:#fff;border:1.6px solid #c2c2c2;box-sizing:border-box;"></div>
<div style="left:1px;top:348px;width:1104px;height:1px;background:#dde1e4;"></div>
<div style="left:11px;top:354px;width:15px;height:15px;background:#fff;border:1.6px solid #c2c2c2;box-sizing:border-box;"></div>
<div class="t" style="left:67px;top:352.32px;font-size:13.5px;color:#1e1e1e;">000003</div>
<div class="t" style="left:124px;top:352.32px;font-size:13.5px;color:#1e1e1e;">VitalGarden</div>
<div class="t" style="left:208px;top:352.32px;font-size:13.5px;color:#1e1e1e;">000003</div>
<div class="t" style="left:282px;top:352.32px;font-size:13.5px;color:#1e1e1e;">202-000003</div>
<div class="t" style="left:371px;top:352.32px;font-size:13.5px;color:#1e1e1e;">FZKO1/DT/123/1</div>
<div class="t" style="left:507px;top:352.32px;font-size:13.5px;color:#1e1e1e;">PLN</div>
<div class="t" style="left:547px;top:352.32px;font-size:13.5px;color:#1e1e1e;">2019.01.01</div>
<div class="t" style="left:633px;top:352.32px;font-size:13.5px;color:#1e1e1e;">G</div>
<div class="t" style="right:395px;top:352.32px;font-size:13.5px;color:#1e1e1e;">0,00</div>
<div class="t" style="right:320px;top:352.32px;font-size:13.5px;color:#1e1e1e;">44 280,00</div>
<div class="t" style="right:224px;top:352.32px;font-size:13.5px;color:#e5473b;">-44 280,00</div>
<div style="left:1061px;top:354px;width:15px;height:15px;background:#fff;border:1.6px solid #c2c2c2;box-sizing:border-box;"></div>
<div style="left:1px;top:374px;width:1104px;height:1px;background:#dde1e4;"></div>
<div style="left:11px;top:380px;width:15px;height:15px;background:#fff;border:1.6px solid #c2c2c2;box-sizing:border-box;"></div>
<div class="t" style="left:67px;top:379.32px;font-size:13.5px;color:#1e1e1e;">000003</div>
<div class="t" style="left:124px;top:379.32px;font-size:13.5px;color:#1e1e1e;">VitalGarden</div>
<div class="t" style="left:208px;top:379.32px;font-size:13.5px;color:#1e1e1e;">000003</div>
<div class="t" style="left:282px;top:379.32px;font-size:13.5px;color:#1e1e1e;">202-000003</div>
<div class="t" style="left:371px;top:379.32px;font-size:13.5px;color:#1e1e1e;">FZKO1/DFGT/123/1</div>
<div class="t" style="left:507px;top:379.32px;font-size:13.5px;color:#1e1e1e;">PLN</div>
<div class="t" style="left:547px;top:379.32px;font-size:13.5px;color:#1e1e1e;">2019.10.17</div>
<div class="t" style="left:633px;top:379.32px;font-size:13.5px;color:#1e1e1e;">G</div>
<div class="t" style="right:395px;top:379.32px;font-size:13.5px;color:#1e1e1e;">0,00</div>
<div class="t" style="right:320px;top:379.32px;font-size:13.5px;color:#1e1e1e;">29 520,00</div>
<div class="t" style="right:224px;top:379.32px;font-size:13.5px;color:#e5473b;">-29 520,00</div>
<div style="left:1061px;top:380px;width:15px;height:15px;background:#fff;border:1.6px solid #c2c2c2;box-sizing:border-box;"></div>
<div style="left:1px;top:400px;width:1104px;height:1px;background:#dde1e4;"></div>
<div style="left:11px;top:406px;width:15px;height:15px;background:#fff;border:1.6px solid #c2c2c2;box-sizing:border-box;"></div>
<div class="t" style="left:67px;top:405.32px;font-size:13.5px;color:#1e1e1e;">000003</div>
<div class="t" style="left:124px;top:405.32px;font-size:13.5px;color:#1e1e1e;">VitalGarden</div>
<div class="t" style="left:208px;top:405.32px;font-size:13.5px;color:#1e1e1e;">000003</div>
<div class="t" style="left:282px;top:405.32px;font-size:13.5px;color:#1e1e1e;">202-000003</div>
<div class="t" style="left:371px;top:405.32px;font-size:13.5px;color:#1e1e1e;">FZKO/AWE/12</div>
<div class="t" style="left:507px;top:405.32px;font-size:13.5px;color:#1e1e1e;">PLN</div>
<div class="t" style="left:547px;top:405.32px;font-size:13.5px;color:#1e1e1e;">2020.01.23</div>
<div class="t" style="left:633px;top:405.32px;font-size:13.5px;color:#1e1e1e;">P</div>
<div class="t" style="right:395px;top:405.32px;font-size:13.5px;color:#1e1e1e;">0,00</div>
<div class="t" style="right:320px;top:405.32px;font-size:13.5px;color:#1e1e1e;">6 150,00</div>
<div class="t" style="right:224px;top:405.32px;font-size:13.5px;color:#e5473b;">-6 150,00</div>
<div style="left:1061px;top:406px;width:15px;height:15px;background:#fff;border:1.6px solid #c2c2c2;box-sizing:border-box;"></div>
<svg style="left:1062px;top:403px;" width="18" height="18" viewBox="0 0 18 18"><path d="M4.6 9.9 L8.7 14.1 L16.9 4.4" fill="none" stroke="#14a0e4" stroke-width="3"/></svg>
<div style="left:1px;top:270px;width:1104px;height:2.6px;background:#0a74bb;"></div>
<div style="left:1px;top:293px;width:1104px;height:3px;background:#0a74bb;"></div>
<div style="left:366px;top:270px;width:135px;height:26px;border:4px solid #0a74bb;box-sizing:border-box;"></div>
<div style="left:1px;top:427px;width:1104px;height:1px;background:#ffffff;"></div>
<div style="left:1px;top:428px;width:1104px;height:1px;background:#c8c8c8;"></div>
<div style="left:1105px;top:209px;width:1px;height:219px;background:#d6d6d6;"></div>
<svg style="left:1110px;top:275px;" width="10" height="8" viewBox="0 0 10 8"><path d="M1 6 L5 1.5 L9 6" fill="none" stroke="#b8b8b8" stroke-width="1.2"/></svg>
<div style="left:1110px;top:286px;width:9px;height:58px;background:#bdbdbd;"></div>
<svg style="left:1110px;top:415px;" width="10" height="8" viewBox="0 0 10 8"><path d="M1 1.5 L5 6 L9 1.5" fill="none" stroke="#b8b8b8" stroke-width="1.2"/></svg>
<div style="left:1px;top:429px;width:1121px;height:16px;background:#fff;"></div>
<svg style="left:5px;top:431px;" width="9" height="11" viewBox="0 0 9 11"><path d="M7.5 1 L2 5.5 L7.5 10" fill="none" stroke="#b8b8b8" stroke-width="1.2"/></svg>
<div style="left:18px;top:433px;width:475px;height:8px;background:#bdbdbd;"></div>
<svg style="left:1093px;top:432px;" width="9" height="11" viewBox="0 0 9 11"><path d="M1.5 1 L7 5.5 L1.5 10" fill="none" stroke="#b8b8b8" stroke-width="1.2"/></svg>
<div style="left:1px;top:445px;width:1121px;height:4px;background:#b8b8b8;"></div>
<div style="left:555px;top:447px;width:3.5px;height:1.2px;background:#f4f4f4;"></div>
<div style="left:560px;top:447px;width:3.5px;height:1.2px;background:#f4f4f4;"></div>
<div style="left:565px;top:447px;width:3.5px;height:1.2px;background:#f4f4f4;"></div>
<div style="left:1px;top:449px;width:1121px;height:32px;background:#e8e8e8;"></div>
<div style="left:1px;top:480px;width:1121px;height:1px;background:#dedede;"></div>
<div style="left:1px;top:481px;width:1121px;height:248px;background:#fff;"></div>
<svg style="left:4px;top:452px;" width="30" height="30" viewBox="0 0 30 30"><rect x="5" y="6.9" width="1.9" height="16.1" fill="#3b72bb"/><rect x="5" y="16.9" width="18" height="1" fill="#3b72bb"/><rect x="5" y="16.9" width="7.7" height="6.1" fill="#3b72bb"/><rect x="14" y="19.2" width="3.7" height="3.8" fill="#bdbdbd"/><rect x="19" y="19.2" width="3.9" height="3.8" fill="#bdbdbd"/><circle cx="16.5" cy="9.2" r="4.6" fill="#fff" stroke="#3b72bb" stroke-width="1.7"/><path d="M19.9 12.6 L22 14.7" stroke="#3b72bb" stroke-width="2.3" stroke-linecap="round"/></svg>
<div class="t" style="left:34px;top:455.32px;font-size:13.5px;color:#1e1e1e;">Przelewy</div>
<svg style="left:94px;top:462px;" width="10" height="6.5" viewBox="0 0 10 6.5"><path d="M1 1 L5.0 5.5 L9 1" fill="none" stroke="#222" stroke-width="1.5"/></svg>
<div style="left:115px;top:453px;width:83px;height:28px;background:#fff;"></div>
<div style="left:115px;top:453px;width:83px;height:2px;background:#1a7fc4;"></div>
<div class="t" style="left:128px;top:457.46px;font-size:13.1px;font-weight:bold;color:#1a7fc4;">Przelewy</div>
<div style="left:197px;top:453px;width:152px;height:28px;background:#fff;border:1px solid #d2d2d2;border-bottom:none;box-sizing:border-box;"></div>
<div class="t" style="left:211px;top:457.29px;font-size:13.6px;color:#5a5a5a;">Przelewy wg statusu</div>
<div style="left:348px;top:453px;width:189px;height:28px;background:#fff;border:1px solid #d2d2d2;border-bottom:none;box-sizing:border-box;border-radius:0 4px 0 0;"></div>
<div class="t" style="left:362px;top:457.29px;font-size:13.6px;color:#5a5a5a;">Przelewy wg statusu-sumy</div>
<svg style="left:7px;top:489px;" width="22" height="22" viewBox="0 0 22 22"><path d="M5.9 6 V3.6 Q5.9 1.3 8.2 1.3 H13.8 Q16.1 1.3 16.1 3.6 V6" fill="none" stroke="#6a6a6a" stroke-width="1.5"/><rect x="1" y="5.8" width="20" height="9.8" rx="2.2" fill="#707070"/><rect x="5.2" y="4.4" width="11.6" height="5.4" fill="#3d73c0"/><rect x="5" y="9.8" width="12" height="0.9" fill="#fff"/><circle cx="2.8" cy="13.4" r="0.7" fill="#fff"/><rect x="6.1" y="14.2" width="9.8" height="6.2" rx="1.2" fill="#fff" stroke="#6a6a6a" stroke-width="1.4"/><path d="M8 16.6 H14 M8 18.3 H14" stroke="#4a86c8" stroke-width="1"/></svg>
<svg style="left:37px;top:497px;" width="9.5" height="5.6" viewBox="0 0 9.5 5.6"><path d="M1 1 L4.75 4.6 L8.5 1" fill="none" stroke="#1f4e8c" stroke-width="1.5"/></svg>
<svg style="left:890px;top:484px;" width="90" height="30" viewBox="0 0 90 30"><path d="M9.5 6 V25.2 H28.9" fill="none" stroke="#6a6a6a" stroke-width="1.1"/><rect x="11.7" y="15.1" width="4.6" height="9.6" fill="#62b866"/><rect x="17.9" y="7.2" width="4.9" height="17.5" fill="#fdbd12"/><rect x="24" y="11.2" width="4.9" height="13.5" fill="#7e57c2"/><rect x="57.1" y="6" width="18.5" height="3.6" rx="0.8" fill="#2f66b3"/><rect x="67.3" y="7.3" width="1.9" height="1.2" fill="#cfe0f4"/><rect x="71.1" y="7.3" width="1.9" height="1.2" fill="#cfe0f4"/><path d="M57.7 9.5 V23 H65.5 M75 9.5 V14.5" fill="none" stroke="#5a5a5a" stroke-width="1.2"/><circle cx="71.9" cy="19.7" r="4.4" fill="#fff" stroke="#2f66b3" stroke-width="1.6"/><path d="M68.6 23 L66.4 25.2" stroke="#2f66b3" stroke-width="2.2" stroke-linecap="round"/></svg>
<svg style="left:924.5px;top:497px;" width="10" height="5.6" viewBox="0 0 10 5.6"><path d="M1 1 L5.0 4.6 L9 1" fill="none" stroke="#1f4e8c" stroke-width="1.5"/></svg>
<div class="t" style="left:972px;top:490.32px;font-size:13.5px;color:#1e1e1e;">Podgląd</div>
<svg style="left:1030px;top:483px;" width="30" height="30" viewBox="0 0 30 30"><path d="M9.9 16.2 A8.2 8.2 0 1 1 26.2 18.2" fill="none" stroke="#35a06a" stroke-width="2.9"/><path d="M10.2 19.6 A8.2 8.2 0 0 0 25.3 21.3" fill="none" stroke="#35a06a" stroke-width="2.9"/><path d="M8.2 7.4 L15.8 14.8 L8.2 15.4 Z" fill="#35a06a"/><path d="M20 18.6 L27.8 18.6 L27.6 26.8 Z" fill="#35a06a"/></svg>
<div style="left:1078px;top:493px;width:1px;height:14px;background:#c8c8c8;"></div>
<svg style="left:1090px;top:483px;" width="30" height="30" viewBox="0 0 30 30"><circle cx="9.4" cy="14.6" r="6.1" fill="none" stroke="#2b64b0" stroke-width="1.3"/><path d="M12.8 19.8 L16.6 24.4" stroke="#2b64b0" stroke-width="2.6" stroke-linecap="round"/><path d="M15.7 9.9 H21.1 M16.9 12.5 H22.4 M18.2 15.1 H22.8" stroke="#2b64b0" stroke-width="1.1"/></svg>
<svg style="left:1067px;top:509px;" width="25" height="10" viewBox="0 0 25 10"><path d="M0.5 9.5 V3 Q0.5 0.5 3 0.5 H22 Q24.5 0.5 24.5 3 V9.5" fill="#f3f3f3" stroke="#c4c0bc"/><path d="M6.8 2.6 L12.5 7.4 L18.2 2.6" fill="none" stroke="#2a60a8" stroke-width="1.9"/></svg>
<div style="left:1px;top:519px;width:1121px;height:1px;background:#d0d0d0;"></div>
<div style="left:1px;top:520px;width:1121px;height:57px;background:#f2f2f2;"></div>
<div style="left:34px;top:520px;width:1px;height:57px;background:#d6d6d6;"></div>
<div style="left:113px;top:520px;width:1px;height:57px;background:#d6d6d6;"></div>
<div style="left:829px;top:520px;width:1px;height:57px;background:#d6d6d6;"></div>
<div style="left:897px;top:520px;width:1px;height:57px;background:#d6d6d6;"></div>
<div style="left:1105px;top:520px;width:1px;height:57px;background:#d6d6d6;"></div>
<div style="left:162px;top:540px;width:1px;height:37px;background:#d6d6d6;"></div>
<div style="left:205px;top:540px;width:1px;height:37px;background:#d6d6d6;"></div>
<div style="left:242px;top:540px;width:1px;height:37px;background:#d6d6d6;"></div>
<div style="left:269px;top:540px;width:1px;height:37px;background:#d6d6d6;"></div>
<div style="left:384px;top:540px;width:1px;height:37px;background:#d6d6d6;"></div>
<div style="left:464px;top:540px;width:1px;height:37px;background:#d6d6d6;"></div>
<div style="left:509px;top:540px;width:1px;height:37px;background:#d6d6d6;"></div>
<div style="left:541px;top:540px;width:1px;height:37px;background:#d6d6d6;"></div>
<div style="left:1022px;top:540px;width:1px;height:37px;background:#d6d6d6;"></div>
<div style="left:113px;top:539px;width:716px;height:1px;background:#d6d6d6;"></div>
<div style="left:897px;top:539px;width:208px;height:1px;background:#d6d6d6;"></div>
<div style="left:93px;top:520px;width:20px;height:19px;border-left:1px solid #d6d6d6;border-bottom:1px solid #d6d6d6;box-sizing:border-box;background:#f3f3f3;"></div>
<svg style="left:96px;top:522px;" width="14" height="15" viewBox="0 0 14 15"><path d="M7 13.5 V2.5 M2.5 7 L7 2.5 L11.5 7" fill="none" stroke="#3aa76b" stroke-width="1.8"/></svg>
<div style="left:1px;top:578px;width:1121px;height:2px;background:#bdb9b9;"></div>
<div class="t" style="left:41px;top:518.6px;font-size:12.7px;font-weight:bold;color:#1a7fc4;">Data</div>
<div class="t" style="left:41px;top:538.6px;font-size:12.7px;font-weight:bold;color:#1a7fc4;">Realizacji</div>
<div class="t" style="left:119px;top:518.6px;font-size:12.7px;font-weight:bold;color:#2e2e2e;">Dowód</div>
<div class="t" style="left:119px;top:538.6px;font-size:12.7px;font-weight:bold;color:#2e2e2e;">Rok</div>
<div class="t" style="left:168px;top:538.6px;font-size:12.7px;font-weight:bold;color:#2e2e2e;">RD</div>
<div class="t" style="left:212px;top:538.6px;font-size:12.7px;font-weight:bold;color:#2e2e2e;">Mag</div>
<div class="t" style="left:248px;top:538.6px;font-size:12.7px;font-weight:bold;color:#2e2e2e;">ND</div>
<div class="t" style="left:275px;top:538.6px;font-size:12.7px;font-weight:bold;color:#2e2e2e;">Numer</div>
<div class="t" style="left:391px;top:538.6px;font-size:12.7px;font-weight:bold;color:#2e2e2e;">Data</div>
<div class="t" style="left:547px;top:538.6px;font-size:12.7px;font-weight:bold;color:#2e2e2e;">Opis</div>
<div class="t" style="left:835px;top:518.6px;font-size:12.7px;font-weight:bold;color:#2e2e2e;">Kwota</div>
<div class="t" style="left:835px;top:538.6px;font-size:12.7px;font-weight:bold;color:#2e2e2e;">Wn</div>
<div class="t" style="left:903px;top:518.6px;font-size:12.7px;font-weight:bold;color:#2e2e2e;">Przelew</div>
<div class="t" style="left:903px;top:538.6px;font-size:12.7px;font-weight:bold;color:#2e2e2e;">Typ</div>
<div class="t" style="left:1028px;top:538.6px;font-size:12.7px;font-weight:bold;color:#2e2e2e;">Zaliczka</div>
<div class="t" style="left:470px;top:538.5px;width:39px;overflow:hidden;font-size:12.7px;font-weight:bold;color:#2e2e2e;">Status</div>
<div class="t" style="left:516px;top:538.6px;font-size:12.7px;font-weight:bold;color:#2e2e2e;">Lp</div>
<svg style="left:1109px;top:542px;" width="12" height="14" viewBox="0 0 12 14"><path d="M9 1.5 L3 7 L9 12.5" fill="none" stroke="#2b6cb8" stroke-width="1.5"/></svg>
<div style="left:10px;top:561px;width:15px;height:15px;background:#fff;border:1.6px solid #c2c2c2;box-sizing:border-box;"></div>
<div style="left:1px;top:580px;width:1104px;height:25px;background:#fff;"></div>
<div style="left:113px;top:580px;width:428px;height:25px;background:#fcfce4;"></div>
<div style="left:830px;top:580px;width:67px;height:25px;background:#80dbe9;"></div>
<div style="left:1px;top:605px;width:1104px;height:1px;background:#dde2e6;"></div>
<div style="left:34px;top:580px;width:1px;height:25px;background:#d3e3f3;"></div>
<div style="left:11px;top:585px;width:15px;height:15px;background:#fff;border:1.6px solid #c2c2c2;box-sizing:border-box;"></div>
<div style="left:35px;top:580px;width:79px;height:25px;border:4px solid #0a74bb;box-sizing:border-box;background:#fff;"></div>
<div class="t" style="left:40px;top:583.29px;font-size:13.6px;color:#1e1e1e;">2020.02.24</div>
<div class="t" style="right:967px;top:583.32px;font-size:13.5px;color:#1e1e1e;">2020</div>
<div class="t" style="left:168px;top:583.32px;font-size:13.5px;color:#1e1e1e;">LK01</div>
<div class="t" style="left:211px;top:583.32px;font-size:13.5px;color:#1e1e1e;">FK</div>
<div class="t" style="right:858px;top:583.32px;font-size:13.5px;color:#1e1e1e;">17</div>
<div class="t" style="left:275px;top:583.32px;font-size:13.5px;color:#1e1e1e;">LK01/FK/20/17</div>
<div class="t" style="left:391px;top:583.32px;font-size:13.5px;color:#1e1e1e;">2020.02.24</div>
<div class="t" style="right:620px;top:583.32px;font-size:13.5px;color:#1e1e1e;">1</div>
<div class="t" style="right:589px;top:583.32px;font-size:13.5px;color:#1e1e1e;">1</div>
<div class="t" style="left:614px;top:583.32px;font-size:13.5px;color:#1e1e1e;">ZAPŁATA ZA:FZKOZ/LUB/002/12</div>
<div class="t" style="right:232px;top:583.32px;font-size:13.5px;color:#1e1e1e;">1 845,00</div>
<div class="t" style="left:902px;top:583.3px;width:115px;overflow:hidden;font-size:13.5px;color:#1e1e1e;-webkit-mask-image:linear-gradient(90deg,#000 107px,rgba(0,0,0,0.15) 115px);">Przelew SplitPayment</div>
<div style="left:1079px;top:585px;width:15px;height:15px;background:#fff;border:1.6px solid #c2c2c2;box-sizing:border-box;"></div>
<svg style="left:1080px;top:582px;" width="18" height="18" viewBox="0 0 18 18"><path d="M4.6 9.9 L8.7 14.1 L16.9 4.4" fill="none" stroke="#14a0e4" stroke-width="3"/></svg>
<div style="left:541px;top:581.5px;width:72px;height:24.5px;border:2.5px solid #f21818;border-radius:6px;box-sizing:border-box;background:#eef1f3;box-shadow:inset 0 0 3px 2px #fff;"></div>
<div class="t" style="left:547px;top:583.43px;font-size:13.2px;color:#1e1e1e;">ZALICZKA</div>
<div style="left:1064px;top:575px;width:42px;height:31px;border:2.5px solid #f21818;border-radius:6px;box-sizing:border-box;"></div>
<div style="left:1px;top:709px;width:1121px;height:1px;background:#b0b0b0;"></div>
<svg style="left:5px;top:712px;" width="10" height="11" viewBox="0 0 10 11"><path d="M7.5 1 L2 5.5 L7.5 10" fill="none" stroke="#b8b8b8" stroke-width="1.2"/></svg>
<div style="left:18px;top:714px;width:504px;height:9px;background:#bdbdbd;"></div>
<svg style="left:1110px;top:712px;" width="10" height="11" viewBox="0 0 10 11"><path d="M1.5 1 L7 5.5 L1.5 10" fill="none" stroke="#b8b8b8" stroke-width="1.2"/></svg>
<div style="left:1px;top:726px;width:1121px;height:1px;background:#e6f2fa;"></div>
<div style="left:0px;top:0px;width:1px;height:729px;background:#1f78c0;"></div>
<div style="left:1123px;top:0px;width:1px;height:729px;background:linear-gradient(180deg,#00a5e5 0px,#08a0e2 729px);"></div>
<div style="left:0px;top:728px;width:1124px;height:1px;background:linear-gradient(90deg,#2b7dbf 0px,#2286ca 220px,#1191d4 340px,#05a0e0 460px,#00a4e4 540px,#00a5e5 1124px);"></div>
</body></html>
